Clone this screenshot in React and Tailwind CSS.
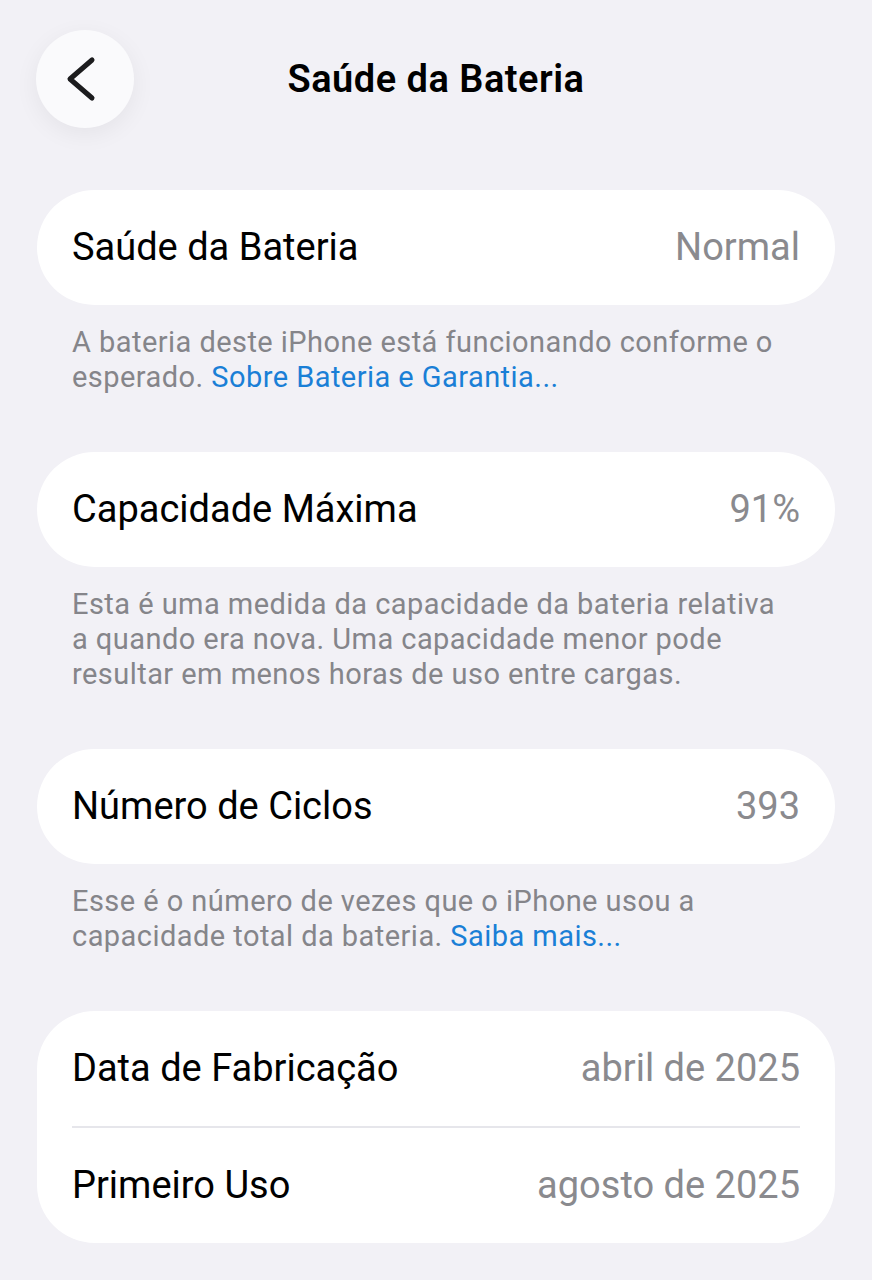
import React from "react";

const FONT = "font-['Roboto','Liberation_Sans',sans-serif]";

const Row = ({ label, value }) => (
  <div className="flex items-center justify-between h-[115px] px-[35px]">
    <span className="text-[38px] text-black">{label}</span>
    <span className="text-[38px] text-[#8a8a8e]">{value}</span>
  </div>
);

const Card = ({ children }) => (
  <div className="mx-[37px] bg-white rounded-[58px] overflow-hidden">{children}</div>
);

const Footer = ({ children }) => (
  <p className="ml-[72px] mr-[80px] mt-[20px] mb-[57px] text-[29px] leading-[35px] tracking-[0.45px] text-[#85858a]">
    {children}
  </p>
);

export default function App() {
  return (
    <div className={`${FONT} min-h-[1280px] w-full bg-[#f2f1f6] overflow-hidden`}>
      {/* Header */}
      <div className="relative flex items-center justify-center h-[98px] mt-[30px] mb-[62px]">
        <button className="absolute left-[36px] top-0 w-[98px] h-[98px] rounded-full bg-[#fafafc] shadow-[0_6px_24px_rgba(0,0,0,0.06)] flex items-center justify-center">
          <svg width="98" height="98" viewBox="0 0 98 98" fill="none">
            <path
              d="M56 30 L34 49 L56 68"
              stroke="#1c1c1e"
              strokeWidth="5"
              strokeLinecap="round"
              strokeLinejoin="round"
            />
          </svg>
        </button>
        <h1 className="text-[38px] font-semibold tracking-[0.5px] text-black">Saúde da Bateria</h1>
      </div>

      <Card>
        <Row label="Saúde da Bateria" value="Normal" />
      </Card>
      <Footer>
        A bateria deste iPhone está funcionando conforme o esperado.{" "}
        <span className="text-[#1a7fd6]">Sobre Bateria e Garantia...</span>
      </Footer>

      <Card>
        <Row label="Capacidade Máxima" value="91%" />
      </Card>
      <Footer>
        Esta é uma medida da capacidade da bateria relativa a quando era nova.
        Uma capacidade menor pode resultar em menos horas de uso entre cargas.
      </Footer>

      <Card>
        <Row label="Número de Ciclos" value="393" />
      </Card>
      <Footer>
        Esse é o número de vezes que o iPhone usou a capacidade total da
        bateria. <span className="text-[#1a7fd6]">Saiba mais...</span>
      </Footer>

      <Card>
        <Row label="Data de Fabricação" value="abril de 2025" />
        <div className="mx-[35px] h-[2px] bg-[#e6e6eb]" />
        <Row label="Primeiro Uso" value="agosto de 2025" />
      </Card>
    </div>
  );
}
